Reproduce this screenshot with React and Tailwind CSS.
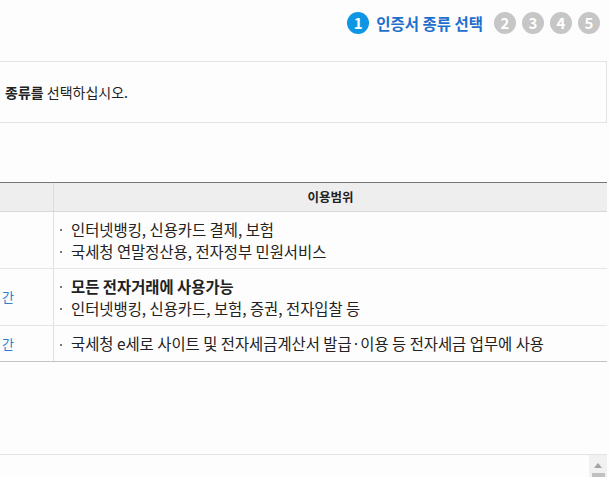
import React from "react";

const font = {
  fontFamily: '"Noto Sans CJK KR", "Noto Sans", sans-serif',
};

function Bullet({ children, bold = false }) {
  return (
    <div className="flex items-center">
      <span className="w-[2px] h-[2px] bg-[#777] ml-[6px] mr-[9px] mt-[2px] shrink-0" />
      <span className={bold ? "font-bold" : ""}>{children}</span>
    </div>
  );
}

export default function App() {
  return (
    <div
      className="w-[609px] h-[477px] overflow-hidden bg-[#fdfdfd] text-[#222] text-[13px] pr-[2px]"
      style={font}
    >
      {/* Steps */}
      <div className="flex items-center justify-end pt-[8px] pr-[7px] h-[30px] box-content">
        <span className="w-[22px] h-[22px] rounded-full bg-[#0e96e4] text-white font-bold text-[15px] leading-[22px] text-center">
          1
        </span>
        <span className="ml-[7px] mr-[11px] text-[#1f6fcd] font-bold text-[15.5px] leading-[22px]">
          인증서 종류 선택
        </span>
        <div className="flex gap-[6px]">
          {["2", "3", "4", "5"].map((n) => (
            <span
              key={n}
              className="w-[22px] h-[22px] rounded-full bg-[#c6c6c6] text-white font-bold text-[15px] leading-[22px] text-center"
            >
              {n}
            </span>
          ))}
        </div>
      </div>

      {/* Info box */}
      <div className="mt-[23px] h-[62px] border border-l-0 border-[#e3e3e3] bg-[#fdfdfd] flex items-center pl-[5px] text-[14px]">
        <p>
          <span className="font-bold">종류를</span> 선택하십시오.
        </p>
      </div>

      {/* Table */}
      <div className="mt-[59px] border-t border-[#777] border-b border-b-[#c4c4c4]">
        <div className="flex h-[29px] bg-[#eeeeee] border-b border-[#d6d6d6] text-[12.5px] font-bold">
          <div className="w-[54px] border-r border-[#dadada]" />
          <div className="flex-1 flex items-center justify-center">이용범위</div>
        </div>

        <div className="flex border-b border-[#e6e6e6]">
          <div className="w-[54px] border-r border-[#e0e0e0]" />
          <div className="flex-1 py-[6px] leading-[22px] text-[15.4px]">
            <Bullet>인터넷뱅킹, 신용카드 결제, 보험</Bullet>
            <Bullet>국세청 연말정산용, 전자정부 민원서비스</Bullet>
          </div>
        </div>

        <div className="flex border-b border-[#e6e6e6]">
          <div className="w-[54px] border-r border-[#e0e0e0] flex items-center pl-[2px] text-[#2a7fd3]">
            간
          </div>
          <div className="flex-1 py-[6px] leading-[22px] text-[15.4px]">
            <Bullet bold>모든 전자거래에 사용가능</Bullet>
            <Bullet>인터넷뱅킹, 신용카드, 보험, 증권, 전자입찰 등</Bullet>
          </div>
        </div>

        <div className="flex">
          <div className="w-[54px] border-r border-[#e0e0e0] flex items-center pl-[2px] text-[#2a7fd3]">
            간
          </div>
          <div className="flex-1 py-[7px] leading-[21px] text-[15.4px]">
            <Bullet>국세청 e세로 사이트 및 전자세금계산서 발급·이용 등 전자세금 업무에 사용</Bullet>
          </div>
        </div>
      </div>

      {/* Text area with scrollbar */}
      <div className="mt-[92px] h-[40px] border-t border-[#e4e4e4] flex">
        <div className="flex-1" />
        <div className="w-[18px] bg-[#f1f1f1] flex flex-col items-center pt-[8px]">
          <svg width="8" height="5" viewBox="0 0 8 5">
            <path d="M4 0 L8 5 L0 5 Z" fill="#a3a3a3" />
          </svg>
          <div className="mt-[5px] w-[13px] h-[20px] bg-[#c1c1c1]" />
        </div>
      </div>
    </div>
  );
}
